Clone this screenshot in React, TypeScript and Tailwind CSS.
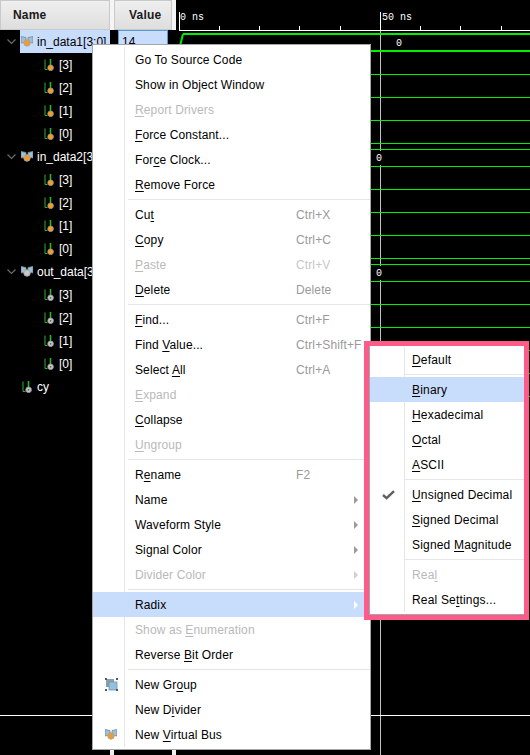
import type { ReactNode } from "react";

const GREEN_THIN = [74, 97, 120, 143, 189, 212, 235, 258, 304, 327, 350, 373, 396];
const GREEN_BUS = [149, 166, 264, 281];
const TICKS = [219, 259, 299, 340, 420, 460, 501];

function Chevron() {
  return (
    <svg width="9" height="6" viewBox="0 0 9 6" className="shrink-0">
      <path d="M0.5 0.5L4.5 4.5L8.5 0.5" fill="none" stroke="#6b6b6b" strokeWidth="1.2" />
    </svg>
  );
}

function BusIcon({ dot = "#f59a23" }: { dot?: string }) {
  return (
    <svg width="12" height="11" viewBox="0 0 12 11" className="shrink-0">
      <path d="M0 0.5L5 1.5V6L0 7Z" fill="#9cc0d8" stroke="#7d8a94" strokeWidth="0.8" />
      <path d="M12 0.5L7 1.5V6L12 7Z" fill="#9cc0d8" stroke="#7d8a94" strokeWidth="0.8" />
      <circle cx="6" cy="7" r="3.2" fill={dot} stroke="#a8a8a8" strokeWidth="1" />
    </svg>
  );
}

function BitIcon({ dot = "#f59a23" }: { dot?: string }) {
  return (
    <svg width="10" height="12" viewBox="0 0 10 12" className="shrink-0">
      <path d="M1 0.5V10.5H3.5" fill="none" stroke="#2bb52b" strokeWidth="1" />
      <path d="M6.5 0V6" fill="none" stroke="#2bb52b" strokeWidth="1.6" />
      <circle cx="6.6" cy="8.8" r="2.8" fill={dot} stroke="#9a9a9a" strokeWidth="0.8" />
      {dot === "#c8c8c8" && <circle cx="6.6" cy="8.8" r="0.9" fill="#5a5a5a" />}
    </svg>
  );
}

function GroupIcon() {
  return (
    <svg width="13" height="13" viewBox="0 0 13 13" className="shrink-0">
      <rect x="1" y="1" width="8" height="8" fill="#8f9da8" />
      <rect x="4" y="4" width="8" height="8" fill="#93c1e0" stroke="#6f93ad" strokeWidth="0.8" />
      <path d="M0 0h2v2H0zM11 0h2v2h-2zM0 11h2v2H0zM11 11h2v2h-2z" fill="#4f5a63" />
    </svg>
  );
}

function Arrow({ color }: { color: string }) {
  return (
    <svg width="4" height="8" viewBox="0 0 4 8" className="shrink-0">
      <path d="M0 0L4 4L0 8Z" fill={color} />
    </svg>
  );
}

function SignalRow({ level, label, dot }: { level: "bit" | "top"; label: string; dot: string }) {
  return (
    <div className={`flex h-[23px] items-center gap-[5px] text-white ${level === "bit" ? "pl-[44px]" : "pl-[22px]"}`}>
      <BitIcon dot={dot} />
      <span>{label}</span>
    </div>
  );
}

function BusRow({ label, dot, selected }: { label: string; dot: string; selected?: boolean }) {
  return (
    <div className="flex h-[23px] items-center pl-[7px]">
      <Chevron />
      <div className={`ml-[4px] flex h-full w-[90px] items-center gap-[4px] pl-px whitespace-nowrap ${selected ? "bg-[#c8dcfc] text-black" : "text-white"}`}>
        <BusIcon dot={dot} />
        <span>{label}</span>
      </div>
    </div>
  );
}

function Item({
  children,
  shortcut,
  disabled,
  arrow,
  active,
  icon,
}: {
  children: ReactNode;
  shortcut?: string;
  disabled?: boolean;
  arrow?: boolean;
  active?: boolean;
  icon?: ReactNode;
}) {
  return (
    <div className={`flex h-[25px] items-center ${active ? "bg-[#c8dcfc]" : ""}`}>
      <div className={`flex h-full w-[32px] shrink-0 items-center border-r pl-[12px] ${active ? "border-transparent" : "border-[#e6e6e6]"}`}>
        {icon}
      </div>
      <div className={`w-[171px] shrink-0 pl-[10px] whitespace-nowrap ${disabled ? "text-[#b9b9b9]" : "text-black"}`}>{children}</div>
      {shortcut && <span className={`whitespace-nowrap ${disabled ? "text-[#c8c8c8]" : "text-[#9a9a9a]"}`}>{shortcut}</span>}
      {arrow && (
        <div className="ml-auto mr-[12px]">
          <Arrow color={active ? "#ffffff" : disabled ? "#d0d0d0" : "#9a9a9a"} />
        </div>
      )}
    </div>
  );
}

function Sep() {
  return (
    <div className="flex h-[5px]">
      <div className="h-full w-[32px] shrink-0 border-r border-[#e6e6e6]" />
      <div className="flex flex-1 items-center pl-[3px]">
        <div className="h-px w-full bg-[#e6e6e6]" />
      </div>
    </div>
  );
}

function SubItem({
  children,
  disabled,
  active,
  checked,
}: {
  children: ReactNode;
  disabled?: boolean;
  active?: boolean;
  checked?: boolean;
}) {
  return (
    <div className={`flex h-[25px] items-center ${active ? "bg-[#c8dcfc]" : ""}`}>
      <div className={`flex h-full w-[35px] shrink-0 items-center border-r pl-[12px] ${active ? "border-transparent" : "border-[#e6e6e6]"}`}>
        {checked && (
          <svg width="13" height="10" viewBox="0 0 13 10">
            <path d="M1 5L4.6 8.2L12 1.2" fill="none" stroke="#5f5f5f" strokeWidth="2.4" />
          </svg>
        )}
      </div>
      <div className={`pl-[7px] whitespace-nowrap ${disabled ? "text-[#b9b9b9]" : "text-black"}`}>{children}</div>
    </div>
  );
}

function SubSep() {
  return (
    <div className="flex h-[5px]">
      <div className="h-full w-[35px] shrink-0 border-r border-[#e6e6e6]" />
      <div className="flex flex-1 items-center">
        <div className="h-px w-full bg-[#e6e6e6]" />
      </div>
    </div>
  );
}

function WaveView() {
  return (
    <svg width="354" height="715" viewBox="176 0 354 715" shapeRendering="crispEdges" className="block">
      {/* ruler */}
      <rect x="179" y="12" width="1" height="18" fill="#fff" />
      <rect x="380" y="12" width="1" height="18" fill="#fff" />
      <rect x="179" y="30" width="351" height="1" fill="#fff" />
      {TICKS.map((x) => (
        <rect key={x} x={x} y="26" width="1" height="4" fill="#fff" />
      ))}
      <text x="180" y="20" fill="#fff" fontSize="10" fontFamily="'Liberation Mono', monospace">0 ns</text>
      <text x="382" y="20" fill="#fff" fontSize="10" fontFamily="'Liberation Mono', monospace">50 ns</text>

      {/* cursor */}
      <rect x="380" y="31" width="1" height="684" fill="#c0c0c0" />

      {/* bus and bit traces */}
      <path d="M179 50L183 34" stroke="#00e600" strokeWidth="2" fill="none" shapeRendering="auto" />
      <rect x="183" y="33" width="347" height="2" fill="#00f000" />
      <rect x="179" y="50" width="351" height="2" fill="#00f000" />
      {GREEN_BUS.map((y) => (
        <rect key={y} x="179" y={y} width="351" height="1" fill="#00f000" />
      ))}
      {GREEN_THIN.map((y) => (
        <rect key={y} x="179" y={y} width="351" height="1" fill="#00f000" />
      ))}

      <text x="396" y="46" fill="#fff" fontSize="10" fontFamily="'Liberation Mono', monospace">0</text>
      <rect x="376" y="151" width="8" height="14" fill="#000" />
      <text x="376" y="161" fill="#fff" fontSize="10" fontFamily="'Liberation Mono', monospace">0</text>
      <rect x="376" y="266" width="8" height="14" fill="#000" />
      <text x="376" y="276" fill="#fff" fontSize="10" fontFamily="'Liberation Mono', monospace">0</text>
    </svg>
  );
}

export default function App() {
  const orange = "#f59a23";
  const gray = "#c8c8c8";
  return (
    <div className="relative flex h-[755px] w-[530px] flex-col overflow-hidden bg-black font-['Liberation_Sans',Arial,sans-serif] text-[12px] leading-none">
      <div className="flex h-[715px]">
        {/* signal list */}
        <div className="w-[176px] shrink-0">
          <div className="flex h-[30px] bg-[#f5f5f5]">
            <div className="flex w-[110px] items-center border border-[#c9c9c9] bg-gradient-to-b from-[#efefef] to-[#dedede] pl-[12px] font-bold tracking-[0.2px] text-[#1a1a1a]">Name</div>
            <div className="ml-[4px] flex w-[58px] items-center border border-[#c9c9c9] bg-gradient-to-b from-[#efefef] to-[#dedede] pl-[14px] font-bold tracking-[0.2px] text-[#1a1a1a]">Value</div>
          </div>
          <div className="flex">
            <div className="w-[118px] shrink-0">
              <BusRow label="in_data1[3:0]" dot={orange} selected />
              {["[3]", "[2]", "[1]", "[0]"].map((l) => (
                <SignalRow key={l} level="bit" label={l} dot={orange} />
              ))}
              <BusRow label="in_data2[3:0]" dot={orange} />
              {["[3]", "[2]", "[1]", "[0]"].map((l) => (
                <SignalRow key={l} level="bit" label={l} dot={orange} />
              ))}
              <BusRow label="out_data[3:0]" dot={gray} />
              {["[3]", "[2]", "[1]", "[0]"].map((l) => (
                <SignalRow key={l} level="bit" label={l} dot={gray} />
              ))}
              <SignalRow level="top" label="cy" dot={gray} />
            </div>
            <div className="flex h-[23px] w-[50px] items-center border border-[#5b9bd5] bg-[#c8dcfc] pl-[3px] text-black">14</div>
          </div>
        </div>
        <WaveView />
      </div>

      <div className="h-px bg-white" />

      {/* bottom strip */}
      <div className="flex flex-1">
        <div className="ml-[110px] h-[5px] w-[4px] self-end bg-[#efefef]" />
        <div className="w-[58px]" />
        <div className="h-[5px] w-[4px] self-end bg-[#efefef]" />
        <div className="ml-[204px] w-px bg-[#c0c0c0]" />
      </div>

      {/* context menu */}
      <div className="absolute left-[92px] top-[44px] h-[706px] w-[279px] border border-[#a6a6a6] bg-white pt-[2px] tracking-[0.12px]">
        <Item>Go To Source Code</Item>
        <Item>Show in Object Window</Item>
        <Item disabled><u className="underline-offset-2">R</u>eport Drivers</Item>
        <Item><u className="underline-offset-2">F</u>orce Constant...</Item>
        <Item>For<u className="underline-offset-2">c</u>e Clock...</Item>
        <Item><u className="underline-offset-2">R</u>emove Force</Item>
        <Sep />
        <Item shortcut="Ctrl+X">Cu<u className="underline-offset-2">t</u></Item>
        <Item shortcut="Ctrl+C"><u className="underline-offset-2">C</u>opy</Item>
        <Item shortcut="Ctrl+V" disabled><u className="underline-offset-2">P</u>aste</Item>
        <Item shortcut="Delete"><u className="underline-offset-2">D</u>elete</Item>
        <Sep />
        <Item shortcut="Ctrl+F"><u className="underline-offset-2">F</u>ind...</Item>
        <Item shortcut="Ctrl+Shift+F">Find <u className="underline-offset-2">V</u>alue...</Item>
        <Item shortcut="Ctrl+A">Select <u className="underline-offset-2">A</u>ll</Item>
        <Item disabled><u className="underline-offset-2">E</u>xpand</Item>
        <Item><u className="underline-offset-2">C</u>ollapse</Item>
        <Item disabled><u className="underline-offset-2">U</u>ngroup</Item>
        <Sep />
        <Item shortcut="F2">R<u className="underline-offset-2">e</u>name</Item>
        <Item arrow>Name</Item>
        <Item arrow>Waveform Style</Item>
        <Item arrow>Signal Color</Item>
        <Item arrow disabled>Divider Color</Item>
        <Sep />
        <Item arrow active>Radix</Item>
        <Item disabled>Show as <u className="underline-offset-2">E</u>numeration</Item>
        <Item>Reverse <u className="underline-offset-2">B</u>it Order</Item>
        <Sep />
        <Item icon={<GroupIcon />}>New Gr<u className="underline-offset-2">o</u>up</Item>
        <Item>New D<u className="underline-offset-2">i</u>vider</Item>
        <Item icon={<BusIcon />}>New <u className="underline-offset-2">V</u>irtual Bus</Item>
      </div>

      {/* radix submenu, highlighted */}
      <div className="absolute left-[364px] top-[341px] h-[279px] w-[165px] border-[5px] border-[#fd5c8b] tracking-[0.18px]">
        <div className="h-full border-b border-l border-[#a6a6a6] bg-white pt-px">
          <SubItem><u className="underline-offset-2">D</u>efault</SubItem>
          <SubSep />
          <SubItem active><u className="underline-offset-2">B</u>inary</SubItem>
          <SubItem><u className="underline-offset-2">H</u>exadecimal</SubItem>
          <SubItem><u className="underline-offset-2">O</u>ctal</SubItem>
          <SubItem><u className="underline-offset-2">A</u>SCII</SubItem>
          <SubSep />
          <SubItem checked><u className="underline-offset-2">U</u>nsigned Decimal</SubItem>
          <SubItem><u className="underline-offset-2">S</u>igned Decimal</SubItem>
          <SubItem>Signed <u className="underline-offset-2">M</u>agnitude</SubItem>
          <SubSep />
          <SubItem disabled>Rea<u className="underline-offset-2">l</u></SubItem>
          <SubItem>Real Se<u className="underline-offset-2">t</u>tings...</SubItem>
        </div>
      </div>
    </div>
  );
}
